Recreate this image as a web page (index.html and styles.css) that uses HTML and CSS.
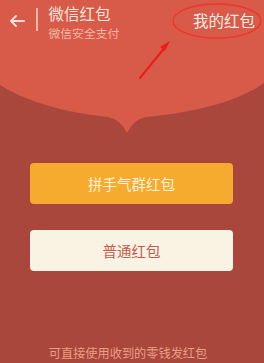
FILE: index.html
```html
<!DOCTYPE html>
<html lang="zh">
<head>
<meta charset="utf-8">
<link rel="stylesheet" href="styles.css">
</head>
<body>
<div class="page">
  <div class="top">
    <svg class="top-bg" width="264" height="136" viewBox="0 0 264 136">
      <path d="M0,0 H264 V83 C240,100 200,112 146,117 Q134,119 127,133 Q120,119 108,117 C60,112 24,100 0,85 Z" fill="#d85a48"/>
    </svg>
    <div class="header">
      <svg class="back" width="16" height="12" viewBox="0 0 16 12">
        <path d="M15,6 H2 M7,1 L2,6 L7,11" fill="none" stroke="#f7e1d8" stroke-width="1.8" stroke-linecap="round" stroke-linejoin="round"/>
      </svg>
      <div class="divider"></div>
      <div class="titles">
        <div class="title">微信红包</div>
        <div class="subtitle">微信安全支付</div>
      </div>
      <div class="mine">我的红包</div>
    </div>
    <svg class="annot" width="264" height="90" viewBox="0 0 264 90">
      <ellipse cx="217" cy="21" rx="44" ry="17" fill="none" stroke="#f2322e" stroke-width="1.3"/>
      <path d="M140,78 L166,46" stroke="#ee1c1c" stroke-width="2" stroke-linecap="round"/>
      <path d="M170,41 L160,47 L165,51 Z" fill="#ee1c1c"/>
    </svg>
  </div>
  <div class="buttons">
    <div class="btn btn-lucky">拼手气群红包</div>
    <div class="btn btn-normal">普通红包</div>
  </div>
  <div class="footer">可直接使用收到的零钱发红包</div>
</div>
</body>
</html>
```
FILE: styles.css
```css
html, body {
  margin: 0;
  padding: 0;
  background: #a9473d;
}
.page {
  width: 264px;
  height: 363px;
  display: flex;
  flex-direction: column;
  font-family: "Noto Sans CJK SC", "Noto Sans", sans-serif;
  overflow: hidden;
}
.top {
  position: relative;
  height: 136px;
  flex: none;
}
.top-bg {
  position: absolute;
  left: 0;
  top: 0;
}
.annot {
  position: absolute;
  left: 0;
  top: 0;
}
.header {
  position: relative;
  display: flex;
  align-items: flex-start;
  padding: 4px 9px 0 9px;
}
.back {
  margin-top: 11px;
  flex: none;
}
.divider {
  width: 1.5px;
  height: 23px;
  background: #f0b8a8;
  margin: 4px 0 0 11px;
  flex: none;
}
.titles {
  margin-left: 11px;
  display: flex;
  flex-direction: column;
}
.title {
  font-size: 15.5px;
  line-height: 18px;
  color: #f8e4da;
}
.subtitle {
  font-size: 11.8px;
  line-height: 14px;
  margin-top: 4px;
  color: #f1b7a6;
}
.mine {
  margin-left: auto;
  margin-top: 6px;
  margin-right: 0;
  font-size: 15.5px;
  line-height: 20px;
  color: #fbece4;
}
.buttons {
  display: flex;
  flex-direction: column;
  gap: 26px;
  padding: 27px 31px 0 30px;
}
.btn {
  height: 41px;
  border-radius: 4px;
  display: flex;
  align-items: center;
  justify-content: center;
  font-size: 14.5px;
}
.btn-lucky {
  background: #f6ab2e;
  color: #fdf1dc;
}
.btn-normal {
  background: #f8f3e2;
  color: #c65b4d;
}
.footer {
  margin-top: auto;
  margin-bottom: 2px;
  padding-right: 8px;
  text-align: center;
  font-size: 12.2px;
  line-height: 16px;
  color: #eb9f86;
}
```
